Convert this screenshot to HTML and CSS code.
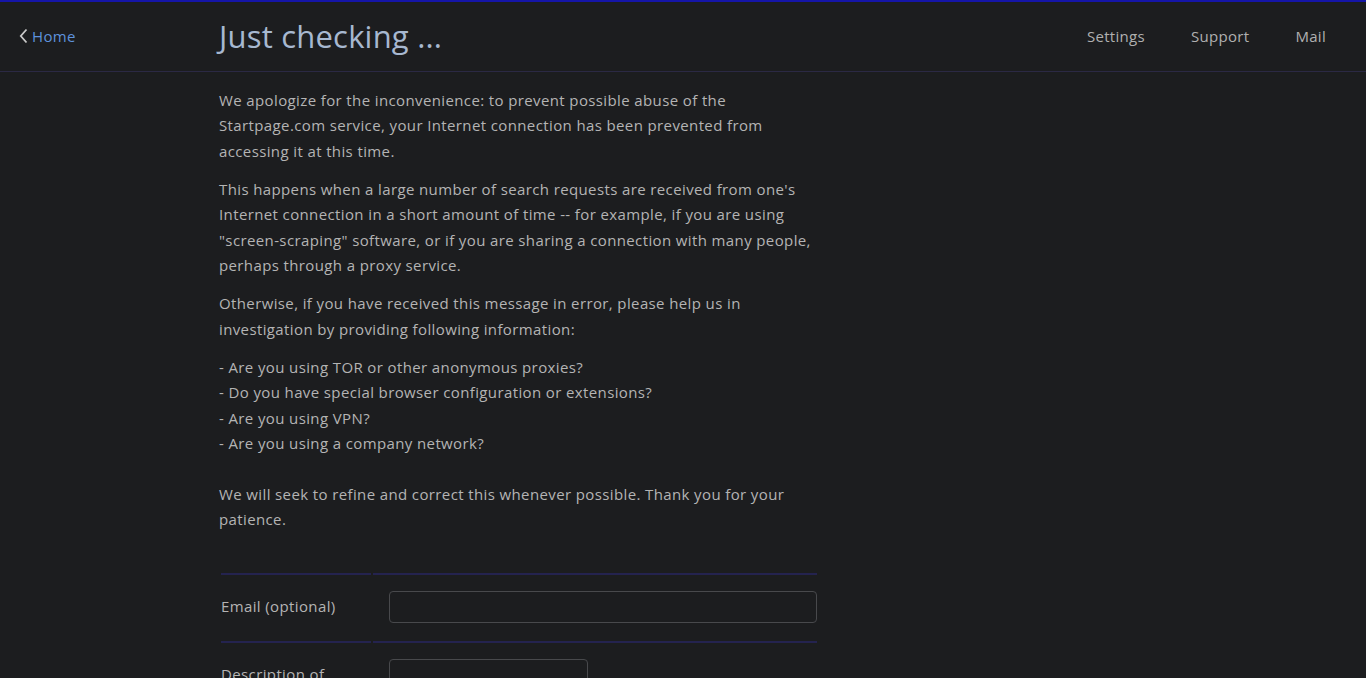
FILE: index.html
```html
<!DOCTYPE html>
<html>
<head>
<meta charset="utf-8">
<link rel="stylesheet" href="styles.css">
</head>
<body>
<header class="topbar">
  <a class="home" href="#"><svg class="chev" width="9" height="16" viewBox="0 0 9 16"><path d="M7.5 1.5 L1.8 8 L7.5 14.5" fill="none" stroke="currentColor" stroke-width="1.8"/></svg><span>Home</span></a>
  <h1 class="title">Just checking ...</h1>
  <nav class="nav">
    <a href="#">Settings</a>
    <a href="#">Support</a>
    <a href="#">Mail</a>
  </nav>
</header>
<main class="content">
  <p>We apologize for the inconvenience: to prevent possible abuse of the Startpage.com service, your Internet connection has been prevented from accessing it at this time.</p>
  <p>This happens when a large number of search requests are received from one's Internet connection in a short amount of time -- for example, if you are using "screen-scraping" software, or if you are sharing a connection with many people, perhaps through a proxy service.</p>
  <p>Otherwise, if you have received this message in error, please help us in investigation by providing following information:</p>
  <p>- Are you using TOR or other anonymous proxies?<br>- Do you have special browser configuration or extensions?<br>- Are you using VPN?<br>- Are you using a company network?<br><br>We will seek to refine and correct this whenever possible. Thank you for your patience.</p>
  <table class="form">
    <tr>
      <td class="label">Email (optional)</td>
      <td class="field"><input class="input wide" type="text"></td>
    </tr>
    <tr>
      <td class="label">Description of</td>
      <td class="field"><input class="input narrow" type="text"></td>
    </tr>
  </table>
</main>
</body>
</html>
```
FILE: styles.css
```css
html, body {
  margin: 0;
  padding: 0;
  background: #1c1d1f;
}
body {
  font-family: "Open Sans", Lato, sans-serif;
  color: #b4b4b4;
  letter-spacing: 0.38px;
}
.topbar {
  display: flex;
  align-items: center;
  box-sizing: border-box;
  height: 72px;
  border-top: 2px solid #1515a8;
  border-bottom: 1px solid #2b2944;
  padding: 0 40px 2px 19px;
}
.home {
  display: flex;
  align-items: center;
  gap: 4px;
  width: 200px;
  color: #5e92dc;
  text-decoration: none;
  font-size: 15px;
}
.chev {
  color: #c8c8c8;
}
.title {
  flex: 1;
  margin: 0;
  font-weight: 400;
  font-size: 31px;
  letter-spacing: 0.2px;
  color: #a7b8d0;
}
.nav {
  display: flex;
  gap: 46px;
}
.nav a {
  color: #b0b0b0;
  text-decoration: none;
  font-size: 15px;
  letter-spacing: 0.3px;
}
.content {
  width: 600px;
  margin-left: 219px;
  padding-top: 16px;
  font-size: 15px;
  line-height: 25.4px;
}
.content p {
  margin: 0 0 12.8px;
}
.form {
  margin-top: 38px;
  border-spacing: 2px;
  width: 600px;
}
.form td {
  border-top: 2px solid #24234f;
  padding: 16px 0 16px;
}
.label {
  width: 150px;
  vertical-align: middle;
}
.field {
  padding-left: 16px !important;
}
.input {
  box-sizing: border-box;
  height: 32px;
  background: #1c1d1f;
  border: 1px solid #48494c;
  border-radius: 4px;
}
.wide { width: 428px; }
.narrow { width: 199px; }
```
